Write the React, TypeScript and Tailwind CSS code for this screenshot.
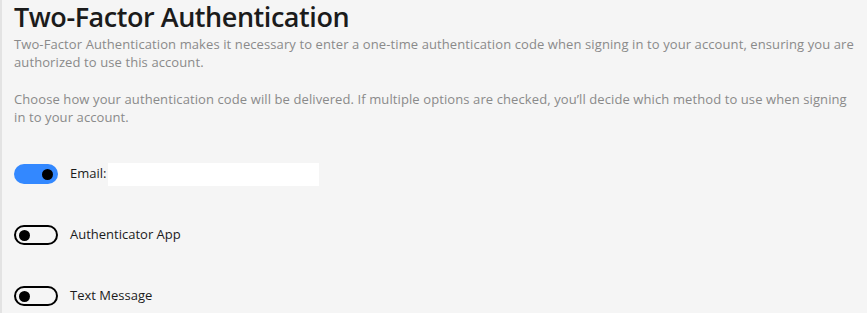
import { useState } from "react";

type Method = { key: string; label: string; on: boolean };

const Toggle = ({ on, onClick }: { on: boolean; onClick: () => void }) => (
  <button
    onClick={onClick}
    className={
      on
        ? "w-[44px] h-[20px] rounded-full bg-[#3388ff] flex items-center justify-end px-[5px] shrink-0"
        : "w-[44px] h-[20px] rounded-full border-2 border-black bg-transparent flex items-center justify-start px-[3px] shrink-0"
    }
  >
    <span className="w-[11px] h-[11px] rounded-full bg-black block" />
  </button>
);

const App = () => {
  const [methods, setMethods] = useState<Method[]>([
    { key: "email", label: "Email:", on: true },
    { key: "app", label: "Authenticator App", on: false },
    { key: "sms", label: "Text Message", on: false },
  ]);

  const flip = (key: string) =>
    setMethods(methods.map((m) => (m.key === key ? { ...m, on: !m.on } : m)));

  return (
    <div className="w-full min-h-screen bg-[#f5f5f5] border-l-2 border-[#e3e3e3] font-['Open_Sans',sans-serif]">
      <div className="pl-[12px] pr-2">
        <h1 className="pt-[1px] text-[27px] leading-[32px] font-semibold text-[#1b1b1b] tracking-[-0.45px]">
          Two-Factor Authentication
        </h1>
        <p className="mt-[2px] text-[13px] leading-[18px] text-[#8a8a8a] tracking-[0.1px]">
          Two-Factor Authentication makes it necessary to enter a one-time authentication code when signing in to your account, ensuring you are authorized to use this account.
        </p>
        <p className="mt-[19px] text-[13px] leading-[18px] text-[#8a8a8a] tracking-[0.1px]">
          Choose how your authentication code will be delivered. If multiple options are checked, you’ll decide which method to use when signing in to your account.
        </p>

        {/* delivery methods */}
        <div className="mt-[38px] flex flex-col gap-[41px]">
          {methods.map((m) => (
            <div key={m.key} className="flex items-center h-[20px]">
              <Toggle on={m.on} onClick={() => flip(m.key)} />
              <span className="ml-[12px] text-[13px] text-[#1b1b1b]">{m.label}</span>
              {m.key === "email" && (
                <input
                  type="text"
                  className="ml-[2px] w-[211px] h-[23px] bg-white outline-none border-0"
                />
              )}
            </div>
          ))}
        </div>
      </div>
    </div>
  );
};

export default App;
